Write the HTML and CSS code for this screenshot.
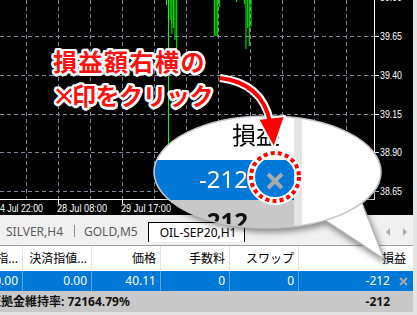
FILE: index.html
```html
<!DOCTYPE html>
<html lang="ja">
<head>
<meta charset="utf-8">
<title>MT4 ターミナル</title>
<link rel="stylesheet" href="styles.css">
</head>
<body>
<div class="win">
  <div class="chart">
    <svg class="chart-svg" width="417" height="215" viewBox="0 0 417 215">
      <g stroke="#7b8796" stroke-width="1" stroke-dasharray="4 3" fill="none">
        <path d="M0 36.5H374M0 75.5H374M0 114.5H374M0 152.5H374M0 191.5H374"/>
        <path d="M26.5 0V199M58.5 0V199M90.5 0V199M122.5 0V199M154.5 0V199M186.5 0V199M218.5 0V199M250.5 0V199M282.5 0V199M314.5 0V199M346.5 0V199"/>
      </g>
      <g stroke="#00ff00" stroke-width="1" fill="none">
        <path d="M166.5 0V5M168.5 0V199M170.2 0V20M171.8 0V34M173.4 0V28M175 0V40M176.7 0V50M214.3 0V36M216 0V36M217.7 0V36M219.7 0V7M236.5 0V2M244.4 0V4M246 0V49M247.7 0V28M249.3 0V46M251 0V27"/>
      </g>
      <g stroke="#ffffff" stroke-width="1" fill="none">
        <path d="M0 199.5H375M374.5 0V200"/>
        <path d="M374 36.5H379M374 75.5H379M374 114.5H379M374 152.5H379M374 191.5H379"/>
        <path d="M58.5 199V204M122.5 199V204M186.5 199V204"/>
      </g>
      <g fill="#ffffff" font-family="Liberation Sans, sans-serif" font-size="11">
        <text x="380" y="1" textLength="22" lengthAdjust="spacingAndGlyphs">39.90</text>
        <text x="380" y="40" textLength="22" lengthAdjust="spacingAndGlyphs">39.65</text>
        <text x="380" y="79" textLength="22" lengthAdjust="spacingAndGlyphs">39.40</text>
        <text x="380" y="118" textLength="22" lengthAdjust="spacingAndGlyphs">39.15</text>
        <text x="380" y="156" textLength="22" lengthAdjust="spacingAndGlyphs">38.90</text>
        <text x="380" y="195" textLength="22" lengthAdjust="spacingAndGlyphs">38.65</text>
      </g>
      <g fill="#ffffff" font-family="Liberation Sans, sans-serif" font-size="10">
        <text x="-5" y="211.5" textLength="48" lengthAdjust="spacingAndGlyphs">24 Jul 22:00</text>
        <text x="57" y="211.5" textLength="50" lengthAdjust="spacingAndGlyphs">28 Jul 08:00</text>
        <text x="121" y="211.5" textLength="50" lengthAdjust="spacingAndGlyphs">29 Jul 17:00</text>
      </g>
    </svg>
  </div>

  <div class="tabs">
    <div class="tab">SILVER,H4</div>
    <div class="tab-sep"></div>
    <div class="tab">GOLD,M5</div>
    <div class="tab active">OIL-SEP20,H1</div>
    <div class="tab-scroll">
      <span class="tri tri-left"></span>
      <span class="tri tri-right"></span>
    </div>
  </div>

  <div class="term">
    <div class="rows">
      <div class="row head">
        <div class="c">決済逆指...</div>
        <div class="c">決済指値...</div>
        <div class="c">価格</div>
        <div class="c">手数料</div>
        <div class="c">スワップ</div>
        <div class="c last">損益</div>
      </div>
      <div class="row sel">
        <div class="c">0.00</div>
        <div class="c">0.00</div>
        <div class="c">40.11</div>
        <div class="c">0</div>
        <div class="c">0</div>
        <div class="c last"><span class="pl">-212</span><span class="close"><svg width="9" height="9" viewBox="0 0 9 9"><path d="M1 1L8 8M8 1L1 8" stroke="#a9a9a9" stroke-width="2"/></svg></span></div>
      </div>
      <div class="row sum">
        <div class="sum-label">証拠金維持率: 72164.79%</div>
        <div class="c last"><span class="pl">-212</span><span class="close"></span></div>
      </div>
    </div>
  </div>
</div>

<svg class="callout-bg" width="417" height="315" viewBox="0 0 417 315">
  <g class="bubble">
    <polygon points="322,218 384,259 362,203" fill="#ffffff" stroke="#b8b8b8" stroke-width="1.2"/>
    <ellipse cx="267.5" cy="172" rx="113.5" ry="56" fill="#ffffff"/>
  </g>
</svg>

<div class="lens">
  <div class="mag">
    <div class="mag-win">
      <div class="term">
        <div class="rows">
          <div class="row head">
            <div class="c">決済逆指...</div>
            <div class="c">決済指値...</div>
            <div class="c">価格</div>
            <div class="c">手数料</div>
            <div class="c">スワップ</div>
            <div class="c last">損益</div>
          </div>
          <div class="row sel">
            <div class="c">0.00</div>
            <div class="c">0.00</div>
            <div class="c">40.11</div>
            <div class="c">0</div>
            <div class="c">0</div>
            <div class="c last"><span class="pl">-212</span><span class="close"><svg width="9" height="9" viewBox="0 0 9 9"><path d="M1 1L8 8M8 1L1 8" stroke="#a9a9a9" stroke-width="2"/></svg></span></div>
          </div>
          <div class="row sum">
            <div class="sum-label">証拠金維持率: 72164.79%</div>
            <div class="c last"><span class="pl">-212</span><span class="close"></span></div>
          </div>
        </div>
      </div>
    </div>
  </div>
</div>

<svg class="callout-fg" width="417" height="315" viewBox="0 0 417 315">
  <ellipse cx="267.5" cy="172" rx="113.5" ry="56" fill="none" stroke="#c4c4c4" stroke-width="1.6"/>
  <circle cx="275" cy="177" r="24" fill="none" stroke="#ffffff" stroke-width="8"/>
  <circle cx="275" cy="177" r="24" fill="none" stroke="#ff0000" stroke-width="4" stroke-dasharray="4 3.2"/>
  <path d="M220 78 Q262 83 270 121" fill="none" stroke="#ffffff" stroke-width="8"/>
  <polygon points="258,119 285,116 274,148" fill="#ff0000" stroke="#ffffff" stroke-width="2" stroke-linejoin="round"/>
  <path d="M220 78 Q262 83 270 122" fill="none" stroke="#ff0000" stroke-width="4"/>
</svg>

<div class="note">
  <div class="note-line one">損益額右横の</div>
  <div class="note-line two"><span class="times">×</span>印をクリック</div>
</div>
</body>
</html>
```

FILE: styles.css
```css
* { box-sizing: border-box; margin: 0; padding: 0; }
html, body { width: 417px; height: 315px; overflow: hidden; }
body {
  position: relative;
  background: #ffffff;
  font-family: "Noto Sans", "Noto Sans CJK JP", sans-serif;
  font-size: 12px;
  color: #000;
}

.win {
  width: 417px;
  height: 315px;
  display: flex;
  flex-direction: column;
  background: #f0f0f0;
  border-right: 4px solid #e4e4e4;
  border-bottom: 3px solid #e4e4e4;
}

.chart { flex: none; height: 215px; background: #000; overflow: hidden; }
.chart-svg { display: block; }

.tabs {
  flex: none;
  height: 31px;
  display: flex;
  align-items: flex-start;
  padding: 7px 0 0 6px;
  border-bottom: 1px solid #a0a0a0;
}
.tab { height: 19px; line-height: 19px; color: #5c5c5c; white-space: nowrap; }
.tab-sep { width: 1px; height: 12px; margin: 3px 9px 0 11px; background: #8a8a8a; }
.tab + .tab-sep + .tab { margin-right: 10px; }
.tab.active {
  height: 20px;
  padding: 0 8px 0 11px;
  background: #fff;
  color: #000;
  border: 1px solid #000;
  border-bottom: none;
}
.tab-scroll { margin-left: auto; margin-right: 6px; display: flex; gap: 13px; padding-top: 6px; }
.tri { width: 0; height: 0; border-top: 4px solid transparent; border-bottom: 4px solid transparent; }
.tri-left { border-right: 4px solid #a8a8a8; }
.tri-right { border-left: 4px solid #a8a8a8; }

.term { flex: 1; background: #fff; overflow: hidden; }
.rows { margin-left: -46px; width: 459px; }
.row { display: grid; grid-template-columns: repeat(5, 69px) 1fr; }
.c {
  text-align: right;
  padding-right: 4px;
  white-space: nowrap;
  overflow: hidden;
  border-right: 1px solid #e3e3e3;
}
.c.last { border-right: none; display: flex; justify-content: flex-end; align-items: center; padding-right: 0; }
.head { height: 25px; line-height: 25px; }
.head .c.last { padding-right: 7px; }
.sel { height: 20px; line-height: 20px; background: #0078d7; color: #fff; }
.sel .c { border-right-color: #5aa5e6; }
.sum { height: 21px; line-height: 21px; background: #c8c8c8; font-weight: 700; color: #111; }
.sum-label { grid-column: 1 / 6; padding-left: 35px; white-space: nowrap; }
.pl { line-height: inherit; }
.close { width: 20px; margin-left: 3px; display: flex; justify-content: center; align-items: center; }
.close svg { display: block; }

.callout-bg { position: absolute; left: 0; top: 0; pointer-events: none; }
.bubble { filter: drop-shadow(2px 4px 3px rgba(0,0,0,0.45)); }
.callout-fg { position: absolute; left: 0; top: 0; pointer-events: none; }

.lens {
  position: absolute;
  left: 154px;
  top: 116px;
  width: 227px;
  height: 112px;
  border-radius: 50%;
  overflow: hidden;
  background: #fff;
}
.mag {
  position: absolute;
  left: -686px;
  top: -498px;
  width: 417px;
  height: 315px;
  transform: scale(2);
  transform-origin: 0 0;
  padding-top: 246px;
  background: #fff;
}
.mag-win { width: 417px; height: 69px; display: flex; border-right: 4px solid #e4e4e4; }
.mag-win .term { height: 66px; }

.note {
  position: absolute;
  left: 53px;
  top: 44px;
  font-family: "Noto Sans CJK JP", sans-serif;
  font-weight: 700;
  font-size: 24px;
  line-height: 34px;
  color: #ff1010;
  white-space: nowrap;
  text-shadow:
    2.5px 0 0 #fff, -2.5px 0 0 #fff, 0 2.5px 0 #fff, 0 -2.5px 0 #fff,
    1.8px 1.8px 0 #fff, -1.8px 1.8px 0 #fff, 1.8px -1.8px 0 #fff, -1.8px -1.8px 0 #fff,
    1px 2.3px 0 #fff, -1px 2.3px 0 #fff, 1px -2.3px 0 #fff, -1px -2.3px 0 #fff,
    2.3px 1px 0 #fff, -2.3px 1px 0 #fff, 2.3px -1px 0 #fff, -2.3px -1px 0 #fff,
    0 0 4px rgba(0,0,0,0.6);
}
.note-line.one { letter-spacing: 1.5px; }
.note-line.two { letter-spacing: -0.5px; }
.times { letter-spacing: -4px; margin-left: -1px; }
```
